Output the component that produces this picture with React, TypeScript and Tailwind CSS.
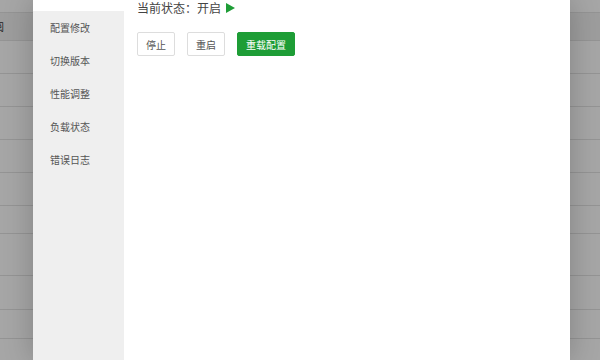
const rows = [
  { h: "h-[13px]", bg: "bg-white", text: "" },
  { h: "h-[28px]", bg: "bg-[#f2f2f2]", text: "阅" },
  { h: "h-[33px]", bg: "bg-white", text: "" },
  { h: "h-[33px]", bg: "bg-white", text: "" },
  { h: "h-[33px]", bg: "bg-white", text: "" },
  { h: "h-[33px]", bg: "bg-white", text: "" },
  { h: "h-[33px]", bg: "bg-white", text: "" },
  { h: "h-[28px]", bg: "bg-white", text: "" },
  { h: "h-[42px]", bg: "bg-white", text: "" },
  { h: "h-[34px]", bg: "bg-white", text: "" },
  { h: "h-[29px]", bg: "bg-white", text: "" },
  { h: "h-[40px]", bg: "bg-white", text: "" },
];

const menu = ["配置修改", "切换版本", "性能调整", "负载状态", "错误日志"];

export default function App() {
  return (
    <div className="relative h-[360px] w-[600px] overflow-hidden bg-white font-['Noto_Sans_CJK_SC',sans-serif] text-[#555]">
      {/* page table behind the overlay */}
      <div className="flex flex-col">
        {rows.map((r, i) => (
          <div
            key={i}
            className={`flex items-center border-b border-[#e4e4e4] ${r.h} ${r.bg}`}
          >
            {r.text && <span className="-ml-[6px] text-[10px] text-[#333]">{r.text}</span>}
          </div>
        ))}
      </div>

      <div className="absolute inset-0 bg-black/35" />

      {/* modal */}
      <div className="absolute bottom-0 left-[33px] right-[30px] top-0 flex bg-white shadow-[0_0_28px_rgba(0,0,0,0.22)]">
        <div className="mt-[11px] flex w-[91px] flex-col bg-[#efefef]">
          {menu.map((m) => (
            <div key={m} className="flex h-[33px] items-center pl-[17px] text-[10px] text-[#555]">
              {m}
            </div>
          ))}
        </div>

        <div className="flex flex-1 flex-col pl-[13px]">
          <div className="flex h-[16px] items-center whitespace-nowrap text-[12px] leading-[16px] text-[#444]">
            <span>当前状态：开启</span>
            <svg className="ml-[5px]" width="9" height="10" viewBox="0 0 9 10">
              <path d="M0 0 L9 5 L0 10 Z" fill="#1e9d36" />
            </svg>
          </div>
          <div className="mt-[16px] flex gap-[12px]">
            <button className="h-[24px] rounded-[2px] border border-[#ddd] bg-white px-[8px] text-[10px] text-[#555]">
              停止
            </button>
            <button className="h-[24px] rounded-[2px] border border-[#ddd] bg-white px-[8px] text-[10px] text-[#555]">
              重启
            </button>
            <button className="h-[24px] rounded-[2px] border border-[#1e9d36] bg-[#1e9d36] px-[8px] text-[10px] text-white">
              重载配置
            </button>
          </div>
        </div>
      </div>
    </div>
  );
}
